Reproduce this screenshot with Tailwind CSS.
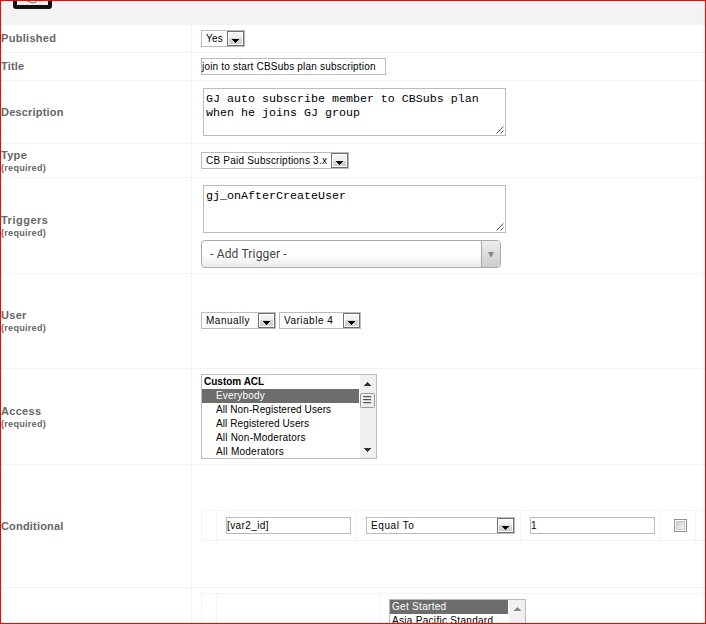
<!DOCTYPE html>
<html lang="en">
<head>
<meta charset="utf-8">
<title>Auto action</title>
<script src="https://cdn.jsdelivr.net/npm/@tailwindcss/browser@4"></script>
</head>
<body class="bg-white">
<svg class="absolute size-0">
  <defs>
    <linearGradient id="face" x1="0" y1="0" x2="0" y2="1"><stop offset="0" stop-color="#f6f6f6"/><stop offset=".5" stop-color="#eee"/><stop offset=".5" stop-color="#d6d6d6"/><stop offset="1" stop-color="#d0d0d0"/></linearGradient>
    <symbol id="arrow" viewBox="0 0 17 15"><rect x=".5" y=".5" width="16" height="14" fill="#fff" stroke="#707070"/><rect x="2" y="2" width="13" height="11" fill="url(#face)"/><path d="M5 8h7v1h-1v1h-1v1h-1v1H8v-1H7v-1H6V9H5z" fill="#000"/></symbol>
    <symbol id="grip" viewBox="0 0 8 8"><path d="M.5 7.5l7-7M4.500 7.500l3-3" stroke="#555" fill="none"/></symbol>
  </defs>
</svg>
<div class="flex h-[624px] w-[706px] flex-col overflow-hidden border border-[#f00] font-['Liberation_Sans',Arial,sans-serif] text-[10px] leading-[14px] text-black">
  <header class="h-[24px] shrink-0 bg-[#f3f3f3] pl-[12px]">
    <svg class="block" width="39" height="8" viewBox="0 0 39 8"><path d="M0 0h39v5q0 3-3 3H3Q0 8 0 5z" fill="#111"/><path d="M4 0h31v4H4z" fill="#eee"/><path d="M14 0l6 2 3-1M23 0l1 1M27 0v1" stroke="#777" fill="none"/></svg>
  </header>

  <section class="flex h-[28px] shrink-0 border-b border-[#f3f3f3]">
    <div class="flex w-[191px] shrink-0 items-center border-r border-[#f3f3f3] pb-[2px] text-[11px] font-bold tracking-[0.3px] text-[#666]">Published</div>
    <div class="pt-[5px] pl-[9px]">
      <div class="flex h-[17px] w-[44px] items-center justify-between border border-[#bbb] pl-[4px]"><span class="tracking-[0.2px]">Yes</span><svg width="17" height="15"><use href="#arrow"/></svg></div>
    </div>
  </section>

  <section class="flex h-[28px] shrink-0 border-b border-[#f3f3f3]">
    <div class="flex w-[191px] shrink-0 items-center border-r border-[#f3f3f3] pb-[2px] text-[11px] font-bold tracking-[0.2px] text-[#666]">Title</div>
    <div class="pt-[5px] pl-[9px]">
      <div class="flex h-[17px] w-[185px] items-center border border-[#bbb]"><span class="whitespace-nowrap tracking-[0.2px]">join to start CBSubs plan subscription</span></div>
    </div>
  </section>

  <section class="flex h-[63px] shrink-0 border-b border-[#f3f3f3]">
    <div class="flex w-[191px] shrink-0 items-center border-r border-[#f3f3f3] text-[11px] font-bold tracking-[0.2px] text-[#666]">Description</div>
    <div class="pt-[7px] pl-[11px]">
      <div class="flex h-[48px] w-[303px] items-end justify-between border border-[#bbb] pr-[1px] pb-[1px] pl-[2px] font-['Liberation_Mono',monospace] text-[11.66px]"><div class="h-[42px] whitespace-nowrap">GJ auto subscribe member to CBSubs plan<br>when he joins GJ group</div><svg width="8" height="8"><use href="#grip"/></svg></div>
    </div>
  </section>

  <section class="flex h-[34px] shrink-0 border-b border-[#f3f3f3]">
    <div class="flex w-[191px] shrink-0 flex-col justify-center border-r border-[#f3f3f3] pt-[2px] text-[11px] leading-[13px] font-bold tracking-[0.3px] text-[#666]">Type<span class="text-[9px] leading-[12px] tracking-[0.3px]">(required)</span></div>
    <div class="pt-[8px] pl-[9px]">
      <div class="flex h-[17px] w-[148px] items-center justify-between border border-[#bbb] pl-[4px]"><span class="whitespace-nowrap tracking-[0.22px]">CB Paid Subscriptions 3.x</span><svg class="shrink-0" width="17" height="15"><use href="#arrow"/></svg></div>
    </div>
  </section>

  <section class="flex h-[96px] shrink-0 border-b border-[#f3f3f3]">
    <div class="flex w-[191px] shrink-0 flex-col justify-center border-r border-[#f3f3f3] pt-[2px] text-[11px] leading-[13px] font-bold tracking-[0.5px] text-[#666]">Triggers<span class="text-[9px] leading-[12px] tracking-[0.3px]">(required)</span></div>
    <div class="pt-[7px] pl-[9px]">
      <div class="ml-[2px] flex h-[48px] w-[303px] items-end justify-between border border-[#bbb] pr-[1px] pb-[1px] pl-[2px] font-['Liberation_Mono',monospace] text-[11.66px]"><div class="h-[42px]">gj_onAfterCreateUser</div><svg width="8" height="8"><use href="#grip"/></svg></div>
      <div class="mt-[7px] flex h-[28px] w-[300px] overflow-hidden rounded-[4px] border border-[#aaa] bg-linear-to-b from-white from-50% to-[#eaeaea]">
        <div class="flex flex-1 items-center pl-[8px] text-[12px] text-[#444]"><span class="font-[Roboto,sans-serif] tracking-[0.17px]">- Add Trigger -</span></div>
        <div class="flex w-[19px] items-center justify-center border-l border-[#aaa] bg-linear-to-b from-[#eee] to-[#ccc]"><svg class="mt-[2px]" width="6" height="6"><path d="M0 0h6L3 6z" fill="#888"/></svg></div>
      </div>
    </div>
  </section>

  <section class="flex h-[95px] shrink-0 border-b border-[#f3f3f3]">
    <div class="flex w-[191px] shrink-0 flex-col justify-center border-r border-[#f3f3f3] text-[11px] leading-[13px] font-bold tracking-[0.3px] text-[#666]">User<span class="text-[9px] leading-[12px] tracking-[0.3px]">(required)</span></div>
    <div class="flex gap-[3px] pt-[38px] pl-[9px]">
      <div class="flex h-[17px] w-[75px] items-center justify-between border border-[#bbb] pl-[4px]"><span class="tracking-[0.5px]">Manually</span><svg width="17" height="15"><use href="#arrow"/></svg></div>
      <div class="flex h-[17px] w-[82px] items-center justify-between border border-[#bbb] pl-[4px]"><span class="tracking-[0.5px]">Variable 4</span><svg width="17" height="15"><use href="#arrow"/></svg></div>
    </div>
  </section>

  <section class="flex h-[96px] shrink-0 border-b border-[#f3f3f3]">
    <div class="flex w-[191px] shrink-0 flex-col justify-center border-r border-[#f3f3f3] pt-[2px] text-[11px] leading-[13px] font-bold tracking-[0.3px] text-[#666]">Access<span class="text-[9px] leading-[12px] tracking-[0.3px]">(required)</span></div>
    <div class="pt-[5px] pl-[9px]">
      <div class="flex h-[85px] w-[176px] overflow-hidden border border-[#bbb]">
        <div class="w-[157px] whitespace-nowrap tracking-[0.1px]">
          <div class="pl-[2px] font-bold tracking-normal">Custom ACL</div>
          <div class="bg-[#6d6d6d] pl-[14px] tracking-[0.2px] text-white">Everybody</div>
          <div class="pl-[14px]">All Non-Registered Users</div>
          <div class="pl-[14px]">All Registered Users</div>
          <div class="pl-[14px] tracking-[0.2px]">All Non-Moderators</div>
          <div class="pl-[14px] tracking-[0.25px]">All Moderators</div>
        </div>
        <svg width="17" height="83" viewBox="-1 0 17 83"><path d="M0 0h16v83H0z" fill="#f0f0f0"/><path d="M4 11h7V10h-1V9H9V8H8V7H7v1H6v1H5v1H4zM4 73h7v1h-1v1H9v1H8v1H7v-1H6v-1H5v-1H4z" fill="#333"/><rect x=".5" y="18.500" width="14" height="14" rx="1" fill="#eee" stroke="#999"/><path d="M3 21.500h8M3 24.500h8M3 27.500h8" stroke="#555"/><path d="M4 22.500h8M4 25.500h8M4 28.500h8" stroke="#ccc"/></svg>
      </div>
    </div>
  </section>

  <section class="flex h-[123px] shrink-0 border-b border-[#f3f3f3]">
    <div class="flex w-[191px] shrink-0 items-center border-r border-[#f3f3f3] text-[11px] font-bold tracking-[0.18px] text-[#666]">Conditional</div>
    <div class="flex-1 pt-[45px] pl-[9px]">
      <div class="flex h-[31px] border-y border-l border-[#f3f3f3]">
        <div class="w-[15px] border-r border-[#f3f3f3]"></div>
        <div class="w-[140px] border-r border-[#f3f3f3] pt-[6px] pl-[9px]"><div class="flex h-[17px] w-[125px] items-center border border-[#bbb]"><span class="tracking-[0.4px]">[var2_id]</span></div></div>
        <div class="w-[164px] border-r border-[#f3f3f3] pt-[6px] pl-[9px]"><div class="flex h-[17px] w-[149px] items-center justify-between border border-[#bbb] pl-[4px]"><span class="tracking-[0.6px]">Equal To</span><svg width="17" height="15"><use href="#arrow"/></svg></div></div>
        <div class="w-[140px] border-r border-[#f3f3f3] pt-[6px] pl-[9px]"><div class="flex h-[17px] w-[125px] items-center border border-[#bbb]"><span>1</span></div></div>
        <div class="w-[35px] border-r border-[#f3f3f3] pt-[8px] pl-[13px]"><div class="size-[13px] border border-[#8e8f8f] p-px"><div class="size-[9px] border border-[#c5c9cf] bg-linear-to-br from-[#cbcfd5] to-[#f6f6f6]"></div></div></div>
      </div>
    </div>
  </section>

  <section class="flex h-[36px] shrink-0">
    <div class="w-[191px] shrink-0 border-r border-[#f3f3f3]"></div>
    <div class="flex-1 pt-[5px] pl-[9px]">
      <div class="flex h-[60px] border-t border-l border-[#f3f3f3]">
        <div class="w-[15px] border-r border-[#f3f3f3]"></div>
        <div class="w-[163px] border-r border-[#f3f3f3]"></div>
        <div class="pt-[5px] pl-[9px]">
          <div class="flex h-[50px] w-[137px] border border-[#bbb] tracking-[0.3px]">
            <div class="w-[118px] whitespace-nowrap"><div class="bg-[#6d6d6d] pl-[2px] text-white">Get Started</div><div class="pl-[2px]">Asia Pacific Standard</div></div>
            <svg width="17" height="48"><path d="M1 0h16v48H1z" fill="#f0f0f0"/><path d="M6 11h7V10h-1V9h-1V8h-1V7H9v1H8v1H7v1H6z" fill="#888"/></svg>
          </div>
        </div>
      </div>
    </div>
  </section>
</div>
</body>
</html>
